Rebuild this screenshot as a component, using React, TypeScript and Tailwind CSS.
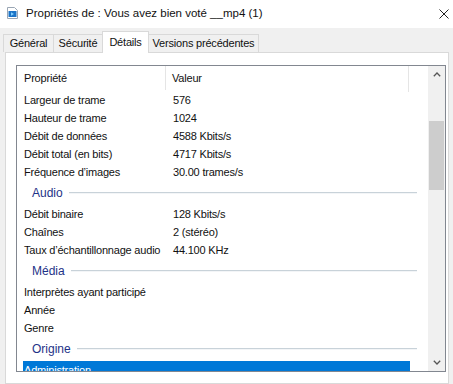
import React from "react";

type Row = { k: string; v?: string } | { g: string };

const rows: Row[] = [
  { k: "Largeur de trame", v: "576" },
  { k: "Hauteur de trame", v: "1024" },
  { k: "Débit de données", v: "4588 Kbits/s" },
  { k: "Débit total (en bits)", v: "4717 Kbits/s" },
  { k: "Fréquence d’images", v: "30.00 trames/s" },
  { g: "Audio" },
  { k: "Débit binaire", v: "128 Kbits/s" },
  { k: "Chaînes", v: "2 (stéréo)" },
  { k: "Taux d’échantillonnage audio", v: "44.100 KHz" },
  { g: "Média" },
  { k: "Interprètes ayant participé" },
  { k: "Année" },
  { k: "Genre" },
  { g: "Origine" },
];

function FileIcon() {
  return (
    <svg width="11" height="12" viewBox="0 0 11 12">
      <path d="M0.5 0.5 H7.5 L10.5 3.5 V11.5 H0.5 Z" fill="#ffffff" stroke="#9aa6b4" />
      <rect x="1.5" y="4" width="8" height="6" fill="#1b74c8" />
      <path d="M4 5.2 L7 7 L4 8.8 Z" fill="#7fd0ff" />
    </svg>
  );
}

export default function App() {
  return (
    <div className="w-[453px] h-[384px] overflow-hidden bg-[#f0f0f0] font-['Liberation_Sans',Arial,sans-serif] text-black flex flex-col">
      {/* title bar */}
      <div className="h-[28px] shrink-0 bg-white flex items-center">
        <div className="ml-[7px] mt-[-2px] flex">
          <FileIcon />
        </div>
        <span className="ml-[8px] text-[11.5px] text-[#111]">Propriétés de : Vous avez bien voté __mp4 (1)</span>
        <div className="ml-auto mr-[3px] w-[12px] h-[12px] flex items-center justify-center">
          <svg width="10" height="10" viewBox="0 0 10 10">
            <path d="M0.5 0.5 L9.5 9.5 M9.5 0.5 L0.5 9.5" stroke="#222" strokeWidth="1" />
          </svg>
        </div>
      </div>

      {/* tabs */}
      <div className="h-[24px] shrink-0 flex items-end pl-[3px] text-[11px] tracking-[-0.2px] text-[#111]">
        <div className="w-[51px] h-[18px] border border-b-0 border-[#d9d9d9] flex items-center justify-center">Général</div>
        <div className="w-[49px] h-[18px] border border-b-0 border-l-0 border-[#d9d9d9] flex items-center justify-center">Sécurité</div>
        <div className="relative z-10 w-[47px] h-[22px] mb-[-1px] -ml-px bg-white border border-b-0 border-[#d9d9d9] flex items-start justify-center pt-[2px]">Détails</div>
        <div className="w-[110px] h-[18px] border border-b-0 border-l-0 border-[#d9d9d9] flex items-center justify-center">Versions précédentes</div>
      </div>

      {/* panel */}
      <div className="flex-1 ml-[5px] mr-[4px] bg-white border border-[#d9d9d9] pl-[10px] pt-[12px]">
        <div className="w-[430px] h-[307px] border border-[#828790] flex overflow-hidden">
          {/* content */}
          <div className="w-[411px] h-full overflow-hidden flex flex-col text-[11px] tracking-[-0.2px] text-[#111]">
            {/* header */}
            <div className="h-[25px] shrink-0 flex">
              <div className="w-[149px] pl-[7px] flex items-center border-r border-[#e5e5e5] h-[24px]">Propriété</div>
              <div className="w-[243px] pl-[6px] flex items-center border-r border-[#e5e5e5] h-[26px] pb-[1px]">Valeur</div>
            </div>
            {rows.map((r, i) =>
              "g" in r ? (
                <div key={i} className="h-[24px] shrink-0 flex items-center pl-[15px] pr-[11px]">
                  <span className="text-[12px] tracking-normal text-[#1e3287]">{r.g}</span>
                  <div className="flex-1 ml-[6px] h-[2px] flex flex-col">
                    <div className="h-px bg-[#c8d2d9]" />
                    <div className="h-px bg-[#f3f5f7]" />
                  </div>
                </div>
              ) : (
                <div key={i} className="h-[18px] shrink-0 flex items-center">
                  <div className="w-[149px] pl-[7px] whitespace-nowrap">{r.k}</div>
                  <div className="pl-[7px] whitespace-nowrap">{r.v ?? ""}</div>
                </div>
              )
            )}
            <div className="h-[18px] shrink-0 ml-[6px] w-[387px] bg-[#0078d7] text-white flex items-center pl-[1px]">
              Administration
            </div>
          </div>
          {/* scrollbar */}
          <div className="w-[17px] h-full bg-[#f0f0f0] flex flex-col items-center">
            <div className="h-[17px] w-full flex items-center justify-center">
              <svg width="8" height="5" viewBox="0 0 8 5">
                <path d="M0.8 4.2 L4 1 L7.2 4.2" fill="none" stroke="#555" strokeWidth="1.3" />
              </svg>
            </div>
            <div className="flex-1 w-full px-px">
              <div className="mt-[38px] h-[69px] w-full bg-[#cdcdcd]" />
            </div>
            <div className="h-[17px] w-full flex items-center justify-center">
              <svg width="8" height="5" viewBox="0 0 8 5">
                <path d="M0.8 0.8 L4 4 L7.2 0.8" fill="none" stroke="#555" strokeWidth="1.3" />
              </svg>
            </div>
          </div>
        </div>
      </div>
    </div>
  );
}
